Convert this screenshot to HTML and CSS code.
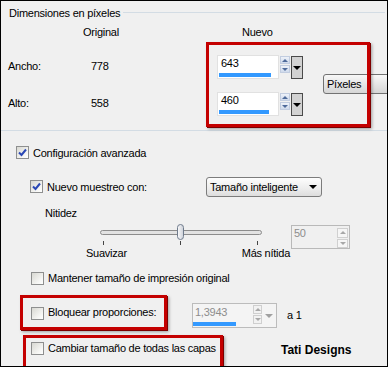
FILE: index.html
```html
<!DOCTYPE html>
<html lang="es">
<head>
    <meta charset="UTF-8">
    <title>Dimensiones en píxeles</title>
    <link rel="stylesheet" href="styles.css">
</head>
<body>
    <div class="dlg">
        <!-- Pixel dimensions group -->
        <section class="dims">
            <div class="legend"><span>Dimensiones en píxeles</span><i class="rule"></i></div>
            <div class="dims-grid">
                <span class="hd-orig">Original</span>
                <span class="hd-new">Nuevo</span>

                <span class="lbl">Ancho:</span>
                <span class="lbl">778</span>
                <div class="spin">
                    <div class="field">643<div class="bar" style="width: 52px"></div></div>
                    <div class="arrows"><span class="up"></span><span class="down"></span></div>
                    <div class="drop"><i></i></div>
                </div>
                <button class="unit" type="button">Píxeles</button>

                <span class="lbl">Alto:</span>
                <span class="lbl">558</span>
                <div class="spin">
                    <div class="field">460<div class="bar" style="width: 50px"></div></div>
                    <div class="arrows"><span class="up"></span><span class="down"></span></div>
                    <div class="drop"><i></i></div>
                </div>
            </div>
        </section>

        <!-- Advanced settings -->
        <section class="adv">
            <div class="row row-a">
                <span class="cb on"><svg viewBox="0 0 11 11"><path d="M2 5.5 L4.5 8 L9 2.5" /></svg></span>
                <span class="txt">Configuración avanzada</span>
            </div>

            <div class="row row-b">
                <div class="check">
                    <span class="cb on"><svg viewBox="0 0 11 11"><path d="M2 5.5 L4.5 8 L9 2.5" /></svg></span>
                    <span class="txt">Nuevo muestreo con:</span>
                </div>
                <div class="select"><span>Tamaño inteligente</span><i></i></div>
            </div>

            <div class="row row-c">Nitidez</div>

            <div class="row row-d">
                <div class="slider">
                    <div class="track"></div>
                    <span class="thumb"></span>
                    <div class="ticks"><i></i><i></i><i></i></div>
                    <div class="scale"><span>Suavizar</span><span>Más nítida</span></div>
                </div>
                <div class="num50">
                    <span class="num-txt">50</span>
                    <div class="arrows small"><span class="up"></span><span class="down"></span></div>
                </div>
            </div>

            <div class="row row-e">
                <span class="cb"></span>
                <span class="txt">Mantener tamaño de impresión original</span>
            </div>

            <div class="row row-f">
                <div class="check">
                    <span class="cb"></span>
                    <span class="txt">Bloquear proporciones:</span>
                </div>
                <div class="spin off">
                    <div class="field">1,3943<div class="bar" style="width: 43px"></div></div>
                    <div class="arrows"><span class="up"></span><span class="down"></span></div>
                    <div class="drop"><i></i></div>
                </div>
                <span class="ratio">a 1</span>
            </div>

            <div class="row row-g">
                <div class="check">
                    <span class="cb"></span>
                    <span class="txt">Cambiar tamaño de todas las capas</span>
                </div>
                <span class="sign">Tati Designs</span>
            </div>
        </section>

        <!-- Red highlight marks drawn over the dialog -->
        <div class="mark mark-1"></div>
        <div class="mark mark-2"></div>
        <div class="mark mark-3"></div>
    </div>
</body>
</html>
```

FILE: styles.css
```css
/* Base */
body {
    margin: 0;
    background: #fff;
}

.dlg {
    position: relative;
    width: 386px;
    height: 365px;
    border: 1px solid #000;
    background: #f0f0f0;
    overflow: hidden;
    font: 11px/13px "Liberation Sans", Arial, sans-serif;
    letter-spacing: -0.25px;
    color: #000;
}

/* Pixel dimensions group */
.dims {
    height: 130px;
    box-sizing: border-box;
    border-bottom: 1px solid #d3dce4;
    padding: 6px 2px 0 7px;
}

.legend {
    display: flex;
}

.legend span {
    margin-left: 1px;
}

.legend .rule {
    flex: 1;
    height: 1px;
    margin: 5px 0 0 3px;
    background: #d3dce4;
}

.dims-grid {
    display: grid;
    grid-template-columns: 83px 126px 86px minmax(0, 1fr);
    grid-template-rows: 29px 37px 24px;
    align-items: start;
    margin-top: 6px;
}

.hd-orig {
    grid-column: 1 / 3;
    padding-left: 75px;
}

.hd-new {
    grid-column: 3 / 5;
    padding-left: 25px;
}

.lbl {
    margin-top: 5px;
}

.unit {
    grid-column: 4;
    grid-row: 2 / 4;
    width: 80px;
    height: 20px;
    margin: 19px 0 0 20px;
    padding: 0 0 0 3px;
    box-sizing: border-box;
    border: 1px solid #727272;
    border-radius: 3px;
    background: linear-gradient(#f8f8f8, #e6e6e6 50%, #d6d6d6);
    font: inherit;
    letter-spacing: inherit;
    text-align: left;
    color: #000;
}

/* Spin box with slider bar */
.spin {
    display: flex;
    align-items: flex-start;
}

.spin .field {
    width: 62px;
    height: 24px;
    box-sizing: border-box;
    padding: 1px 0 0 3px;
    background: #fff;
    border: 1px solid #e1e1e1;
}

.bar {
    height: 4px;
    margin: 3px 0 0 -2px;
    background: #3399ff;
}

.arrows {
    display: flex;
    flex-direction: column;
    gap: 1px;
    width: 10px;
    margin: 1px 0 0 1px;
}

.arrows span {
    display: flex;
    align-items: center;
    justify-content: center;
    height: 8px;
    box-sizing: border-box;
    border: 1px solid #c2cde0;
    background: linear-gradient(#eef2f9, #cfdaec);
}

.arrows .up::before {
    content: "";
    border-left: 3px solid transparent;
    border-right: 3px solid transparent;
    border-bottom: 3px solid #4e6a9a;
}

.arrows .down::before {
    content: "";
    border-left: 3px solid transparent;
    border-right: 3px solid transparent;
    border-top: 3px solid #4e6a9a;
}

.drop {
    display: flex;
    align-items: center;
    justify-content: center;
    width: 12px;
    height: 23px;
    box-sizing: border-box;
    margin: 1px 0 0 1px;
    border: 1px solid #4a4a4a;
    background: #d2d2d2;
}

.drop i {
    border-left: 4px solid transparent;
    border-right: 4px solid transparent;
    border-top: 4px solid #000;
}

/* Disabled spin (ratio) */
.spin.off {
    width: 85px;
    height: 25px;
    box-sizing: border-box;
    border: 1px solid #bcbcbc;
    background: #f4f4f4;
}

.spin.off .field {
    width: 60px;
    height: 23px;
    padding: 2px 0 0 2px;
    border: 0;
    background: transparent;
    color: #8d8d8d;
}

.spin.off .arrows {
    width: 9px;
    margin: 1px 0 0 0;
}

.spin.off .arrows span {
    height: 9px;
    border-color: #cfcfcf;
    background: #f2f2f2;
}

.spin.off .arrows span::before {
    border-top-color: #a8a8a8;
    border-bottom-color: #a8a8a8;
}

.spin.off .drop {
    width: 10px;
    height: 21px;
    margin: 1px 0 0 2px;
    border: 0;
    background: transparent;
}

.spin.off .drop i {
    border-top-color: #a0a0a0;
}

/* Advanced section */
.adv {
    padding-top: 15px;
}

.row {
    display: flex;
    align-items: flex-start;
}

.check {
    display: flex;
    align-items: flex-start;
}

.txt {
    margin-left: 4px;
}

.cb {
    display: block;
    flex: none;
    width: 13px;
    height: 13px;
    box-sizing: border-box;
    border: 1px solid #8e8f8f;
    background: linear-gradient(135deg, #d8d8d2, #f6f6f4 70%, #fff);
}

.cb svg {
    display: block;
    width: 11px;
    height: 11px;
}

.cb path {
    fill: none;
    stroke: #2b48b5;
    stroke-width: 2;
}

.row-a {
    margin-left: 15px;
}

.row-a .txt {
    margin-top: 1px;
}

.row-b {
    margin: 17px 0 0 29px;
}

.row-b .check {
    width: 176px;
}

.row-b .cb {
    margin-top: 3px;
}

.row-b .txt {
    margin-top: 4px;
}

.select {
    display: flex;
    align-items: center;
    width: 116px;
    height: 20px;
    box-sizing: border-box;
    padding-left: 3px;
    border: 1px solid #7c7c7c;
    border-radius: 3px;
    background: linear-gradient(#fdfdfd, #ececec 60%, #dddddd);
}

.select i {
    margin: 0 4px 0 auto;
    border-left: 4px solid transparent;
    border-right: 4px solid transparent;
    border-top: 4px solid #000;
}

.row-c {
    margin: 10px 0 0 44px;
}

/* Sharpness slider */
.row-d {
    margin-top: 4px;
}

.slider {
    position: relative;
    width: 204px;
    margin-left: 85px;
}

.track {
    height: 5px;
    box-sizing: border-box;
    margin: 6px 28px 0 14px;
    border: 1px solid #8c8c8c;
    border-radius: 3px;
    background: #e2e2e2;
}

.thumb {
    position: absolute;
    left: 91px;
    top: 0;
    width: 7px;
    height: 16px;
    box-sizing: border-box;
    border: 1px solid #6f7b8c;
    border-radius: 4px;
    background: linear-gradient(90deg, #f6f6f8, #cfd3da);
}

.ticks {
    display: flex;
    height: 4px;
    margin-top: 6px;
}

.ticks i {
    width: 1px;
    background: #444;
    margin-left: 76px;
}

.ticks i:first-child {
    margin-left: 17px;
}

.scale {
    display: flex;
    justify-content: space-between;
    margin-top: 2px;
}

.num50 {
    display: flex;
    justify-content: space-between;
    width: 59px;
    height: 24px;
    box-sizing: border-box;
    margin: 1px 0 0 1px;
    padding: 1px 1px 0 2px;
    border: 1px solid #b9b9b9;
    color: #8d8d8d;
}

.arrows.small {
    width: 11px;
    margin: 1px 0 0 0;
}

.arrows.small span {
    height: 10px;
    border-color: #d0d0d0;
    background: #f6f6f6;
}

.arrows.small span::before {
    border-top-color: #a8a8a8;
    border-bottom-color: #a8a8a8;
}

/* Checkbox rows */
.row-e {
    margin: 12px 0 0 30px;
}

.row-f {
    margin: 18px 0 0 30px;
}

.row-f .check {
    width: 161px;
}

.row-f .cb {
    margin-top: 4px;
}

.row-f .txt {
    margin-top: 3px;
}

.ratio {
    margin: 6px 0 0 10px;
}

.row-g {
    margin: 14px 0 0 30px;
}

.row-g .check {
    width: 250px;
}

.sign {
    margin-top: 1px;
    font-size: 12px;
    line-height: 14px;
    font-weight: bold;
    letter-spacing: 0;
}

/* Red highlight marks */
.mark {
    position: absolute;
    box-sizing: border-box;
    border: 3px solid #c40000;
    box-shadow: 1px 1px 0 #7d0000, 2px 2px 3px rgba(0, 0, 0, 0.35);
}

.mark-1 {
    left: 205px;
    top: 41px;
    width: 164px;
    height: 85px;
}

.mark-2 {
    left: 19px;
    top: 294px;
    width: 147px;
    height: 35px;
}

.mark-3 {
    left: 22px;
    top: 334px;
    width: 200px;
    height: 40px;
}
```
